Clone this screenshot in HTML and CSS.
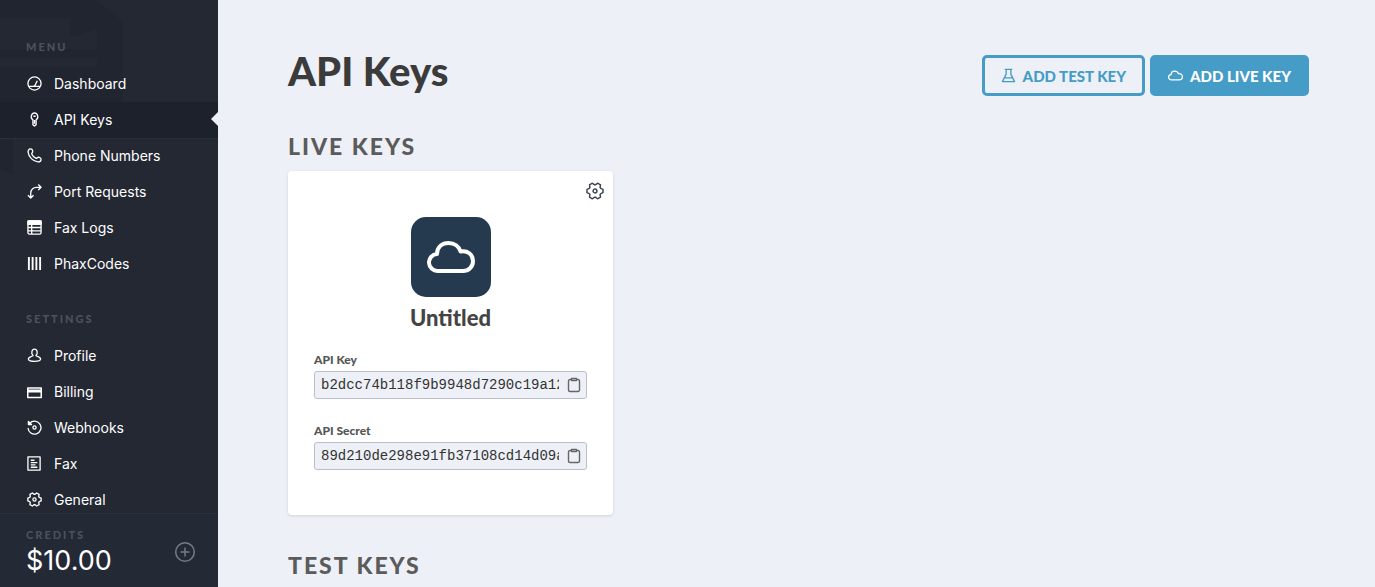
FILE: index.html
```html
<!DOCTYPE html>
<html lang="en">
<head>
<meta charset="utf-8">
<meta name="viewport" content="width=device-width, initial-scale=1">
<title>API Keys</title>
<link rel="stylesheet" href="styles.css">
</head>
<body>
<svg class="sprite" aria-hidden="true">
  <symbol id="gear" viewBox="0 0 16 16"><path d="M15.100 6.500v3l-2 .8-.6 1 .4 2.100-2.600 1.500-1.700-1.300H7.400l-1.700 1.300-2.600-1.500.4-2.100-.6-1-2-.8v-3l2-.8.6-1-.4-2.100 2.600-1.500 1.700 1.300h1.200l1.700-1.300 2.600 1.500-.4 2.100.6 1z"/><circle cx="8" cy="8" r="1.700"/></symbol>
  <symbol id="cloud" viewBox="0 0 48 34"><path d="M11 31a8.500 8.500 0 0 1-1-17C10 7 15 3 21.500 3c6 0 10.500 3.500 12 8.500 7-1.500 12.500 3 12.500 9.500 0 6-4.500 10-10 10z"/></symbol>
  <symbol id="clipboard" viewBox="0 0 14 16"><path d="M4 2.500H3A1.500 1.500 0 0 0 1.500 4v9A1.500 1.500 0 0 0 3 14.500h8a1.500 1.500 0 0 0 1.500-1.500V4A1.500 1.500 0 0 0 11 2.500h-1M4.500 1.500h5v2h-5z"/></symbol>
</svg>
<div class="app">
  <aside class="sidebar">
    <svg class="watermark" viewBox="0 0 124 180" aria-hidden="true">
      <path d="M0 0h95l11 9v128H13v38L0 168v-31V67h97v-9H0v-9h97V28L78 36h-8V18H0z"/>
      <path d="M95 0l28 21v116h-17V9z"/>
    </svg>
    <div class="menus">
      <nav class="menu" aria-labelledby="menu-title">
        <h2 class="eyebrow" id="menu-title">MENU</h2>
        <a class="item" href="#"><svg class="icon" viewBox="0 0 16 16"><circle cx="8" cy="8" r="7"/><path d="M2 11h12M8 11l3-6M7 10.500h2"/></svg>Dashboard</a>
        <a class="item active" href="#" aria-current="page"><svg class="icon" viewBox="0 0 16 16"><path d="M6.300 8.300A4 4 0 0 1 8 1a4 4 0 0 1 1.700 7.300v5.200L8 15l-1.700-1.500zM6.800 4.500h2.400M8 8.500v4"/></svg>API Keys</a>
        <a class="item" href="#"><svg class="icon" viewBox="0 0 16 16"><path d="M1.200 4.500C1 2.400 2 1 3.700 1 5.500 1 6.400 2.700 6 4.300L5 6c.4 2 3 4.600 5 5l1.700-1c1.600-.4 3.300.5 3.300 2.300S13.600 15 11.500 14.800C6.500 14.300 1.700 9.500 1.200 4.500z"/></svg>Phone Numbers</a>
        <a class="item" href="#"><svg class="icon" viewBox="0 0 16 16"><path d="M4 15V9.500a6 6 0 0 1 6-6h5M12 .6l3 2.900-3 2.900M1 12l3 3 3-3"/></svg>Port Requests</a>
        <a class="item" href="#"><svg class="icon" viewBox="0 0 16 16"><rect x="1" y="1" width="14" height="14" rx="1.500"/><path class="solid" d="M1 1h14v3.500H1z"/><path d="M1 8h14M1 11.500h14M5 4v11"/></svg>Fax Logs</a>
        <a class="item" href="#"><svg class="icon bars" viewBox="0 0 16 16"><path d="M2 1v14M6 1v14M10 1v14M14 1v14"/></svg>PhaxCodes</a>
      </nav>
      <nav class="menu" aria-labelledby="settings-title">
        <h2 class="eyebrow" id="settings-title">SETTINGS</h2>
        <a class="item" href="#"><svg class="icon" viewBox="0 0 16 16"><path d="M6.500 8C4 6 5 1.200 8 1.200S12 6 9.500 8c0 1 5 1.300 5 3.800 0 1.700-3 2.500-6.500 2.500s-6.500-.8-6.500-2.500C1.500 9.300 6.500 9 6.500 8z"/></svg>Profile</a>
        <a class="item" href="#"><svg class="icon card-icon" viewBox="0 0 16 16"><path d="M.8 3.300h14.400v9.900H.8z"/><path class="solid" d="M1 5.500h14v1.600H1z"/></svg>Billing</a>
        <a class="item" href="#"><svg class="icon" viewBox="0 0 16 16"><path d="M2.800 3.600A6.900 6.900 0 1 1 1.100 8.500"/><path class="solid" d="M1.500 1.500v3.300h3.300z"/><circle cx="8" cy="8" r="1.700"/></svg>Webhooks</a>
        <a class="item" href="#"><svg class="icon" viewBox="0 0 16 16"><path d="M1 1h13v14H1zM4 4.500h4M4 7h7M4 9.500h5M4 12h7"/></svg>Fax</a>
        <a class="item" href="#"><svg class="icon"><use href="#gear"/></svg>General</a>
      </nav>
    </div>
    <footer class="credits">
      <div>
        <h2 class="eyebrow">CREDITS</h2>
        <p class="balance">$10.00</p>
      </div>
      <button class="plain add" type="button" aria-label="Add credits"><svg viewBox="0 0 22 22"><circle cx="11" cy="11" r="9.300"/><path d="M11 6.500v9M6.500 11h9"/></svg></button>
    </footer>
  </aside>
  <main class="main">
    <header class="top">
      <h1 class="title">API Keys</h1>
      <div class="actions">
        <button class="btn outline" type="button"><svg class="btn-icon" viewBox="0 0 16 16"><path d="M4 1.500h8M5.500 1.500v5l-4 8h13l-4-8v-5M4 10.500h8"/></svg>ADD TEST KEY</button>
        <button class="btn filled" type="button"><svg class="btn-icon cloud-small"><use href="#cloud"/></svg>ADD LIVE KEY</button>
      </div>
    </header>
    <section>
      <h2 class="section-title">LIVE KEYS</h2>
      <article class="card">
        <button class="plain settings" type="button" aria-label="Key settings"><svg><use href="#gear"/></svg></button>
        <div class="badge"><svg><use href="#cloud"/></svg></div>
        <h3 class="name">Untitled</h3>
        <div class="field">
          <label for="key">API Key</label>
          <div class="box"><input id="key" type="text" readonly value="b2dcc74b118f9b9948d7290c19a12"><button class="plain copy" type="button" aria-label="Copy API key"><svg><use href="#clipboard"/></svg></button></div>
        </div>
        <div class="field">
          <label for="secret">API Secret</label>
          <div class="box"><input id="secret" type="text" readonly value="89d210de298e91fb37108cd14d09a"><button class="plain copy" type="button" aria-label="Copy API secret"><svg><use href="#clipboard"/></svg></button></div>
        </div>
      </article>
    </section>
    <section>
      <h2 class="section-title">TEST KEYS</h2>
    </section>
  </main>
</div>
</body>
</html>
```
FILE: styles.css
```css
* { box-sizing: border-box; }
body { margin: 0; background: #edf0f6; color: #3b3b3b; font-family: Lato, sans-serif; }
h1, h2, h3, p { margin: 0; }
svg { fill: none; stroke: currentColor; stroke-linejoin: round; }
.sprite { position: absolute; width: 0; height: 0; }
.plain { padding: 0; border: 0; background: none; color: inherit; cursor: pointer; }
.plain svg { display: block; }
.app { display: flex; height: 100vh; }

.sidebar { position: relative; display: flex; flex-direction: column; flex: 0 0 218px; background: #232833; color: #fff; }
.watermark { position: absolute; top: 0; left: 0; width: 124px; height: 180px; fill: #1f242e; stroke: none; opacity: 0.6; }
.menus { position: relative; flex: 1; min-height: 0; overflow: hidden; display: flex; flex-direction: column; gap: 30px; padding-top: 40px; }
.menu { display: flex; flex-direction: column; flex: none; }
.eyebrow { color: #4c515c; font-size: 11px; line-height: 14px; font-weight: 900; letter-spacing: 2px; }
.menu .eyebrow { padding: 0 26px 12px; }
.item { position: relative; display: flex; align-items: center; gap: 12px; height: 36px; padding: 0 27px; color: #fff; font: 14px/20px Inter, sans-serif; text-decoration: none; }
.active { background: #1c212c; box-shadow: 0 1px #2a303b; }
.active::after { content: ""; position: absolute; right: 0; top: 10px; border: 7px solid transparent; border-left: 0; border-right-color: #edf0f6; }
.icon { width: 15px; height: 15px; flex: none; margin-bottom: 2px; stroke-width: 1.4; }
.bars { stroke-width: 2; }
.card-icon { margin-bottom: 0; stroke-width: 1.6; }
.solid { fill: currentColor; }
.credits { position: relative; display: flex; align-items: center; justify-content: space-between; height: 74px; padding: 2px 22px 0 26px; background: #242936; border-top: 1px solid #2b303b; }
.credits .eyebrow { padding-top: 4px; }
.balance { font: 27px/38px Inter, sans-serif; }
.add { color: #777b85; }
.add svg { width: 22px; height: 22px; stroke-width: 1.5; }

.main { flex: 1; min-width: 0; overflow: hidden; padding: 46px 66px 0 70px; }
.top { display: flex; justify-content: space-between; align-items: flex-start; margin-bottom: 36px; }
.title { font-size: 40px; line-height: 50px; font-weight: 900; }
.actions { display: flex; gap: 5px; padding-top: 9px; }
.btn { display: flex; align-items: center; gap: 7px; height: 41px; padding: 0 16px; border: 3px solid #449cc7; border-radius: 5px; font: 900 15px/20px Lato, sans-serif; cursor: pointer; }
.outline { background: transparent; color: #449cc7; }
.filled { padding: 0 15px; background: #449cc7; color: #fff; }
.btn-icon { width: 15px; height: 15px; stroke-width: 1.4; }
.cloud-small { stroke-width: 4; }
.section-title { color: #5b5b5b; font-size: 23px; line-height: 28px; font-weight: 900; letter-spacing: 2px; }
.card { position: relative; display: flex; flex-direction: column; align-items: center; width: 325px; margin: 11px 0 36px; padding: 46px 26px 45px; border-radius: 4px; background: #fff; box-shadow: 0 1px 3px rgba(40, 55, 80, 0.16); }
.settings { position: absolute; top: 11px; right: 9px; color: #3e4450; }
.settings svg { width: 18px; height: 18px; stroke-width: 1.3; }
.badge { display: grid; place-items: center; width: 80px; height: 80px; border-radius: 15px; background: #25394f; color: #fff; }
.badge svg { width: 48px; height: 34px; stroke-width: 4; }
.name { margin: 6px 0 19px; color: #444; font-size: 22px; line-height: 30px; font-weight: 900; }
.field { width: 100%; margin-bottom: 24px; color: #555; }
.field:last-child { margin-bottom: 0; }
.field label { display: block; margin-bottom: 3px; font-size: 12px; line-height: 16px; font-weight: 900; }
.box { display: flex; align-items: center; gap: 8px; height: 28px; padding: 0 5px 0 6px; border: 1px solid #babdca; border-radius: 3px; background: #edf0f6; }
.box input { flex: 1; min-width: 0; padding: 0; border: 0; outline: 0; background: transparent; color: #333; font: 14px/20px "Liberation Mono", monospace; }
.copy { color: #666; }
.copy svg { width: 14px; height: 16px; stroke-width: 1.4; }
```
